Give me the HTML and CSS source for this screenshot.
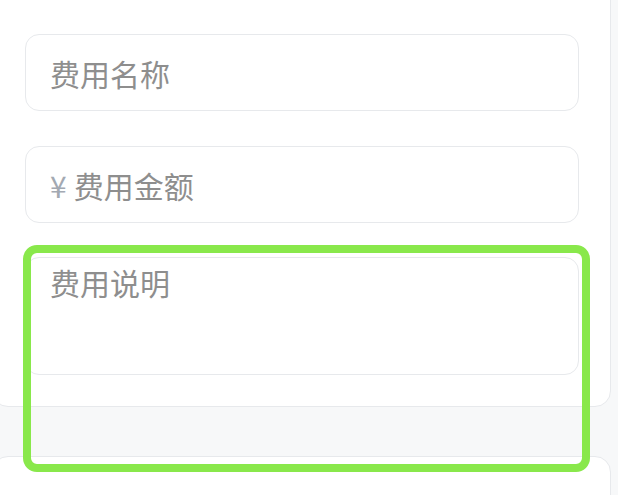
FILE: index.html
```html
<!DOCTYPE html>
<html lang="zh-CN">
<head>
<meta charset="utf-8">
<link rel="stylesheet" href="styles.css">
</head>
<body>
<div class="page">
  <section class="card">
    <div class="field"><span class="ph">费用名称</span></div>
    <div class="field"><span class="yen">¥</span><span class="ph">费用金额</span></div>
    <div class="field area"><span class="ph">费用说明</span></div>
  </section>
  <section class="card next"></section>
  <div class="highlight"></div>
</div>
</body>
</html>
```
FILE: styles.css
```css
html, body {
  margin: 0;
  padding: 0;
}
body {
  background: #f7f8f9;
  font-family: "Noto Sans CJK SC", "Noto Sans", sans-serif;
  overflow: hidden;
}
.page {
  position: relative;
  width: 618px;
  height: 495px;
  overflow: hidden;
}
.card {
  margin: -20px 0 0 -8px;
  width: 619px;
  box-sizing: border-box;
  background: #fff;
  border: 1px solid #e7e9ec;
  border-radius: 16px;
  padding: 53px 31px 31px 32px;
  display: flex;
  flex-direction: column;
  gap: 35px;
}
.card.next {
  margin-top: 49px;
  height: 120px;
  padding: 0;
}
.field {
  height: 77px;
  box-sizing: border-box;
  border: 1px solid #e7e9ec;
  border-radius: 14px;
  padding: 0 24px;
  display: flex;
  align-items: center;
  background: #fff;
}
.field + .field.area {
  margin-top: -1px;
}
.field.area {
  height: 118px;
  align-items: flex-start;
  padding-top: 4px;
}
.ph {
  font-size: 30px;
  line-height: 40px;
  color: #8e8e8e;
}
.yen {
  font-family: "Noto Sans CJK SC", sans-serif;
  font-size: 30px;
  color: #a3a9b2;
  margin-right: 7px;
  line-height: 40px;
}
.highlight {
  position: absolute;
  left: 23px;
  top: 245px;
  width: 567px;
  height: 227px;
  box-sizing: border-box;
  border: 8px solid #89e84b;
  border-radius: 14px;
}
```
